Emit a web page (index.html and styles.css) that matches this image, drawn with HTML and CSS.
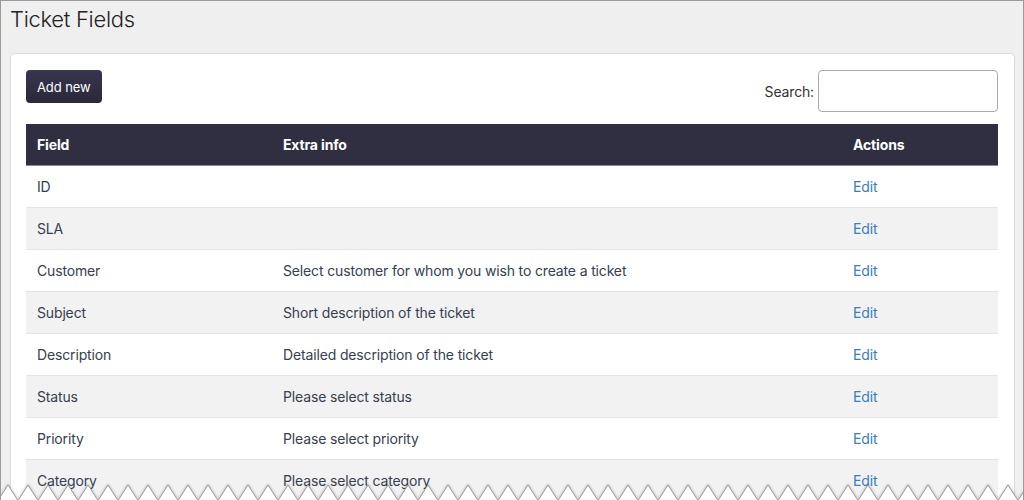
FILE: index.html
```html
<!DOCTYPE html>
<html lang="en">
<head>
    <meta charset="UTF-8">
    <meta name="viewport" content="width=device-width, initial-scale=1.0">
    <title>Ticket Fields</title>
    <link rel="stylesheet" href="styles.css">
</head>
<body>

<div class="window">
    <h1 class="page-title">Ticket Fields</h1>

    <div class="card">
        <div class="toolbar">
            <button class="btn-add">Add new</button>
            <label class="search">Search: <input type="text"></label>
        </div>

        <table class="fields-table">
            <thead>
                <tr>
                    <th class="col-field">Field</th>
                    <th>Extra info</th>
                    <th class="col-actions">Actions</th>
                </tr>
            </thead>
            <tbody>
                <tr><td>ID</td><td></td><td><a href="#">Edit</a></td></tr>
                <tr><td>SLA</td><td></td><td><a href="#">Edit</a></td></tr>
                <tr><td>Customer</td><td>Select customer for whom you wish to create a ticket</td><td><a href="#">Edit</a></td></tr>
                <tr><td>Subject</td><td>Short description of the ticket</td><td><a href="#">Edit</a></td></tr>
                <tr><td>Description</td><td>Detailed description of the ticket</td><td><a href="#">Edit</a></td></tr>
                <tr><td>Status</td><td>Please select status</td><td><a href="#">Edit</a></td></tr>
                <tr><td>Priority</td><td>Please select priority</td><td><a href="#">Edit</a></td></tr>
                <tr><td>Category</td><td>Please select category</td><td><a href="#">Edit</a></td></tr>
            </tbody>
        </table>
    </div>

    <!-- torn bottom edge of the screenshot -->
    <svg class="torn-edge" width="1024" height="16" viewBox="0 0 1024 16">
        <defs>
            <pattern id="teeth" x="-2" y="0" width="20" height="16" patternUnits="userSpaceOnUse">
                <polygon points="0,16.5 10,1 20,16.5" fill="#ffffff" stroke="#9a9a9a" stroke-width="1"/>
            </pattern>
        </defs>
        <rect x="0" y="0" width="1024" height="16" fill="url(#teeth)"/>
    </svg>
</div>

</body>
</html>
```

FILE: styles.css
```css
* {
    box-sizing: border-box;
    margin: 0;
    padding: 0;
}

body {
    font-family: "Inter", "Liberation Sans", Arial, sans-serif;
    background: #ffffff;
    color: #36404e;
    letter-spacing: -0.15px;
}

.window {
    position: relative;
    width: 1024px;
    height: 500px;
    overflow: hidden;
    background: #efefef;
    border: 1px solid #9a9a9a;
    border-bottom: none;
    padding: 0 8px 0 9px;
}

.page-title {
    font-size: 22px;
    font-weight: 300;
    line-height: 30px;
    padding-top: 3px;
    color: #222222;
    letter-spacing: -0.3px;
}

/* Card */
.card {
    margin-top: 19px;
    background: #ffffff;
    border: 1px solid #dcdcdc;
    border-radius: 5px;
    padding: 16px 16px 16px 15px;
}

.toolbar {
    display: flex;
    justify-content: space-between;
    align-items: flex-start;
    margin-bottom: 12px;
}

.btn-add {
    height: 33px;
    padding: 0 11px;
    background: linear-gradient(#383650, #2a2839);
    color: #ffffff;
    border: none;
    border-radius: 4px;
    font-family: inherit;
    font-size: 13px;
    font-weight: 400;
    letter-spacing: -0.1px;
    cursor: pointer;
}

.search {
    display: flex;
    align-items: center;
    font-size: 14px;
    color: #333333;
}

.search input {
    width: 180px;
    height: 42px;
    margin-left: 4px;
    border: 1px solid #aaaaaa;
    border-radius: 4px;
    outline: none;
}

/* Table */
.fields-table {
    width: 100%;
    border-collapse: collapse;
    font-size: 14px;
}

.fields-table th {
    height: 41px;
    padding: 0 11px;
    background: #302f42;
    color: #ffffff;
    font-weight: 700;
    text-align: left;
    border-bottom: 1px solid #8a8a96;
}

.fields-table .col-field {
    width: 246px;
}

.fields-table .col-actions {
    width: 156px;
}

.fields-table td {
    height: 42px;
    padding: 0 11px;
    border-bottom: 1px solid #e4e4e4;
}

.fields-table tbody tr:nth-child(even) {
    background: #f2f2f2;
}

.fields-table a {
    color: #3a7dbf;
    text-decoration: none;
}

.torn-edge {
    position: absolute;
    left: -1px;
    bottom: 0;
    filter: drop-shadow(0 -1px 1px rgba(0, 0, 0, 0.2));
}
```
